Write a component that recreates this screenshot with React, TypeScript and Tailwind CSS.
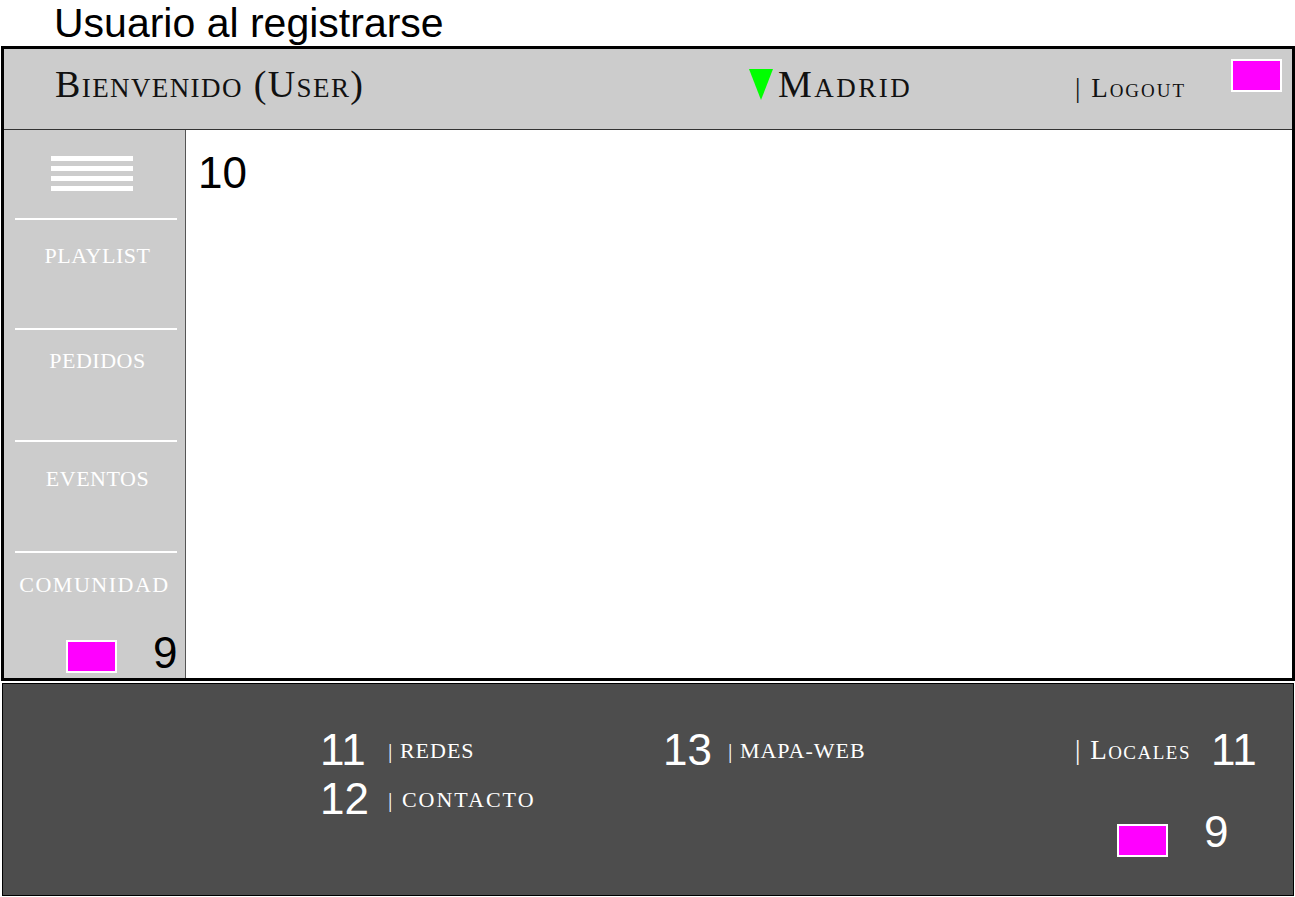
const serif = "font-['Liberation_Serif',serif]";
const sans = "font-['Liberation_Sans',Arial,sans-serif]";

function Swatch({ className = '' }: { className?: string }) {
  return <div className={`h-[33px] w-[51px] border-2 border-white bg-[#ff00ff] ${className}`} />;
}

function SideLine() {
  return <div className="ml-[11px] h-[2px] w-[162px] bg-white" />;
}

function SideItem({ label, pad, h }: { label: string; pad: string; h: string }) {
  return (
    <div className={`${h} ${pad} pl-[6px] text-center text-[22px] leading-[22px] tracking-[0.5px] text-white ${serif}`}>
      {label}
    </div>
  );
}

export default function App() {
  return (
    <div className="h-[897px] w-[1295px] overflow-hidden bg-white">
      {/* titulo */}
      <div className={`h-[46px] pl-[54px] text-[41px] leading-[46px] text-black ${sans}`}>Usuario al registrarse</div>

      {/* marco */}
      <div className="ml-[1px] w-[1294px] border-[3px] border-black">
        {/* cabecera */}
        <div className={`flex h-[81px] items-start border-b border-[#333] bg-[#cccccc] text-[#111] ${serif}`}>
          <div className="mt-[15px] w-[744px] pl-[51px] text-[38px] leading-[40px] tracking-[1.4px] [font-variant:small-caps]">
            Bienvenido (User)
          </div>
          <div className="mt-[15px] flex w-[327px] items-center">
            <svg width="26" height="34" viewBox="0 0 26 34" className="shrink-0">
              <polygon points="1,2 25,2 13,33" fill="#00ff00" />
            </svg>
            <span className="ml-[4px] text-[38px] leading-[40px] tracking-[2.5px] [font-variant:small-caps]">Madrid</span>
          </div>
          <div className="mt-[24px] w-[156px] text-[27px] leading-[30px] tracking-[2px] [font-variant:small-caps]">
            | Logout
          </div>
          <Swatch className="mt-[10px]" />
        </div>

        {/* cuerpo */}
        <div className="flex h-[548px]">
          <div className="flex w-[182px] flex-col border-r border-[#555] bg-[#cccccc]">
            <div className="h-[88px] pl-[47px] pt-[26px]">
              <div className="flex w-[82px] flex-col gap-[5px]">
                <div className="h-[5px] bg-white" />
                <div className="h-[5px] bg-white" />
                <div className="h-[5px] bg-white" />
                <div className="h-[5px] bg-white" />
              </div>
            </div>
            <SideLine />
            <SideItem label="PLAYLIST" pad="pt-[25px]" h="h-[108px]" />
            <SideLine />
            <SideItem label="PEDIDOS" pad="pt-[20px]" h="h-[110px]" />
            <SideLine />
            <SideItem label="EVENTOS" pad="pt-[26px]" h="h-[109px]" />
            <SideLine />
            <div className="flex-1">
              <div className={`pt-[21px] text-center text-[22px] leading-[22px] tracking-[1.5px] text-white ${serif}`}>
                COMUNIDAD
              </div>
              <div className="mt-[37px] flex items-end pl-[62px]">
                <Swatch />
                <span className={`ml-[36px] text-[44px] leading-[40px] text-black ${sans}`}>9</span>
              </div>
            </div>
          </div>
          <div className={`flex-1 bg-white pl-[12px] pt-[21px] text-[44px] leading-none text-black ${sans}`}>10</div>
        </div>
      </div>

      {/* pie */}
      <div className="ml-[2px] mt-[2px] flex h-[213px] w-[1292px] border border-black bg-[#4d4d4d] pl-[317px] pt-[44px] text-white">
        <div className="flex w-[343px] flex-col gap-[5px]">
          <div className="flex items-center">
            <span className={`w-[68px] text-[44px] leading-[44px] ${sans}`}>11</span>
            <span className={`text-[22px] tracking-[1px] ${serif}`}>| REDES</span>
          </div>
          <div className="flex items-center">
            <span className={`w-[68px] text-[44px] leading-[44px] ${sans}`}>12</span>
            <span className={`text-[22px] tracking-[2px] ${serif}`}>| CONTACTO</span>
          </div>
        </div>
        <div className="flex h-[44px] w-[412px] items-center">
          <span className={`w-[65px] text-[44px] leading-[44px] ${sans}`}>13</span>
          <span className={`text-[22px] tracking-[1px] ${serif}`}>| MAPA-WEB</span>
        </div>
        <div className="flex flex-col">
          <div className="flex h-[44px] items-center">
            <span className={`w-[136px] text-[27px] tracking-[1.5px] [font-variant:small-caps] ${serif}`}>| Locales</span>
            <span className={`text-[44px] leading-[44px] ${sans}`}>11</span>
          </div>
          <div className="mt-[40px] flex items-start pl-[42px]">
            <Swatch className="mt-[12px]" />
            <span className={`ml-[36px] text-[44px] leading-[40px] ${sans}`}>9</span>
          </div>
        </div>
      </div>
    </div>
  );
}
